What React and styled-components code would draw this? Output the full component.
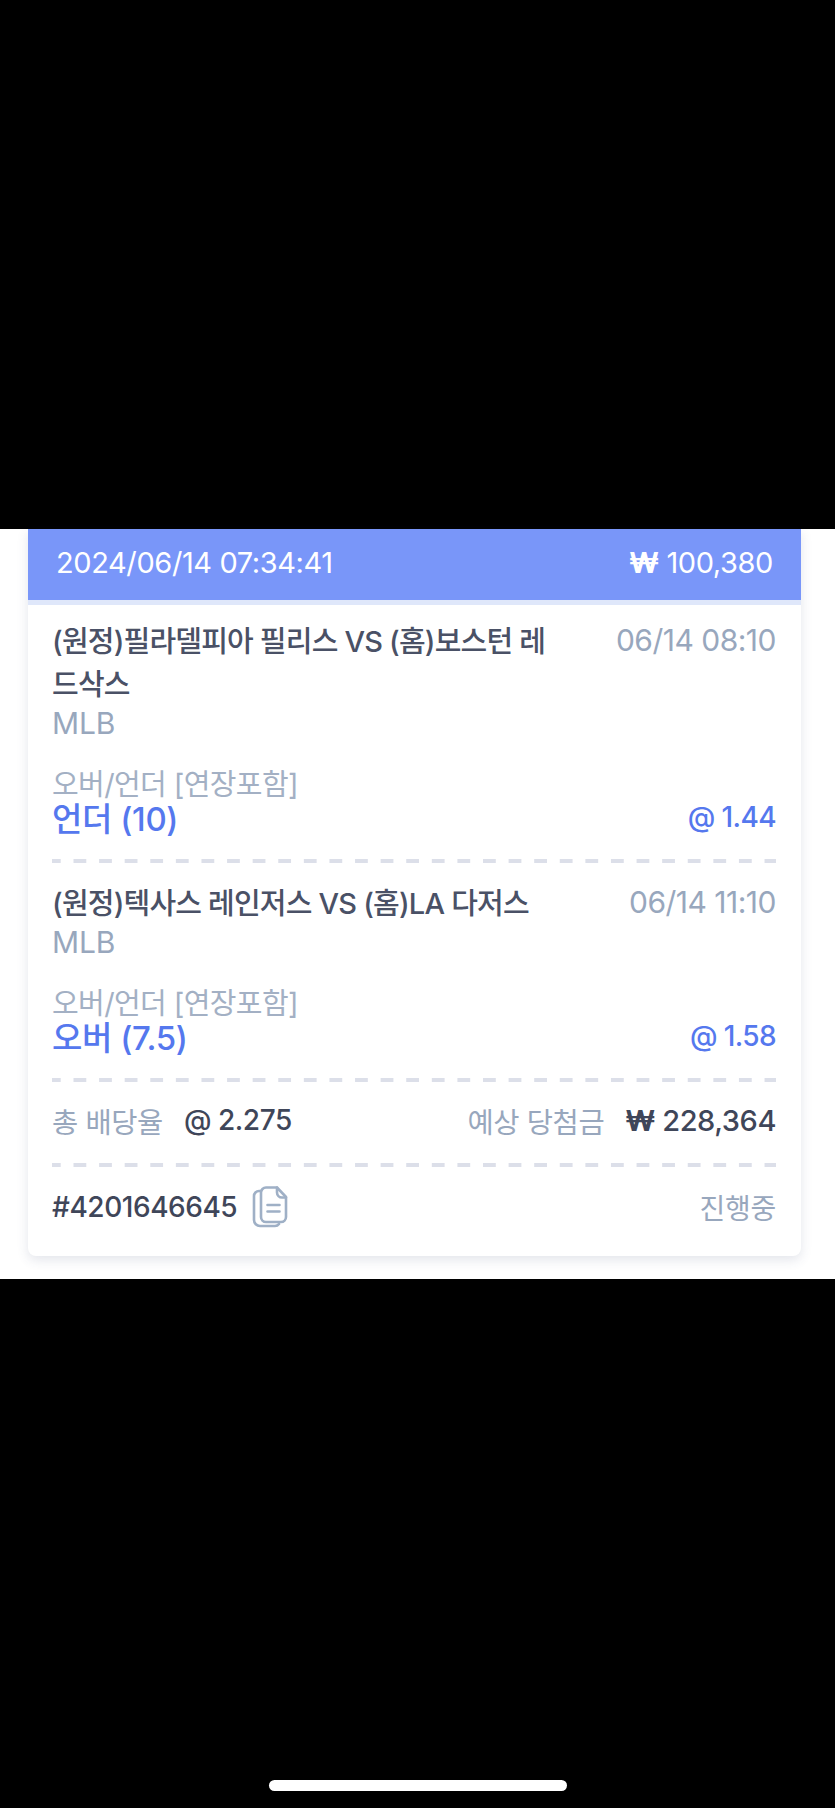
import React from "react";
import styled, { createGlobalStyle } from "styled-components";

const Global = createGlobalStyle`
  html, body { margin: 0; padding: 0; background: #000; }
  body { font-family: Inter, "Noto Sans CJK KR", sans-serif; }
`;
const Page = styled.div`
  width: 835px; height: 1808px; background: #000; display: flex; flex-direction: column; overflow: hidden;
`;
const TopBlack = styled.div`height: 529px; flex: none;`;
const Sheet = styled.section`
  height: 750px; flex: none; background: #fff; padding: 0 34px 0 28px; box-sizing: border-box;
`;
const Card = styled.div`
  height: 727px; background: #fff; border-radius: 0 0 8px 8px; box-shadow: 0 4px 12px rgba(60, 70, 110, 0.14); overflow: hidden;
`;
const Header = styled.header`
  height: 71px; box-sizing: border-box; background: #7996f9; display: flex; justify-content: space-between; align-items: center;
  padding: 0 28px 4px 28px; color: #fff; font-size: 29px; line-height: 36px; letter-spacing: -0.4px;
`;
const Strip = styled.div`height: 5px; background: #dfe7fa;`;
const Body = styled.div`padding: 15px 25px 0 24px; color: #3f4659;`;
const MatchRow = styled.div`display: flex; justify-content: space-between; align-items: flex-start; gap: 30px;`;
const Title = styled.div`
  font-size: 29px; line-height: 43px; font-weight: 500; color: #4a5166; width: 500px; letter-spacing: -0.8px; word-break: break-all;
`;
const Time = styled.div`font-size: 30px; line-height: 40px; color: #98a7bd; white-space: nowrap; letter-spacing: -0.5px;`;
const League = styled.div`font-size: 30px; line-height: 34px; color: #98a7bd; letter-spacing: -0.1px;`;
const Market = styled.div`font-size: 29px; line-height: 36px; color: #a3b0c4; margin-top: 27px; letter-spacing: -0.6px;`;
const PickRow = styled.div`display: flex; justify-content: space-between; align-items: center; height: 36px;`;
const Pick = styled.div`font-size: 33px; line-height: 36px; margin-top: -4px; font-weight: 500; color: #5578ee; letter-spacing: -0.4px;`;
const Odds = styled.div`font-size: 28px; line-height: 36px; margin-top: -8px; font-weight: 500; color: #5578ee; letter-spacing: -0.6px;`;
const Dash = styled.div`
  height: 4px; margin: ${p => p.$m}; background-image: linear-gradient(90deg, #dcdfe9 50%, transparent 50%);
  background-size: 25.6px 100%; background-position: 21.5px 0;
`;
const Summary = styled.div`display: flex; justify-content: space-between; align-items: center; height: 36px; margin-top: -4px;`;
const Group = styled.div`display: flex; align-items: center; gap: ${p => p.$g}px;`;
const Label = styled.span`font-size: 28.5px; color: #98a7bd; letter-spacing: -0.4px;`;
const Value = styled.span`font-size: ${p => p.$s}px; font-weight: 500; color: #3f4659; letter-spacing: -0.45px;`;
const Won = styled.span`font-weight: 700;`;
const Footer = styled.div`display: flex; justify-content: space-between; align-items: center; height: 44px; margin-top: -3px;`;
const Status = styled.span`font-size: 28px; color: #98a7bd; letter-spacing: -0.3px;`;
const BottomBlack = styled.div`flex: 1; display: flex; justify-content: center; align-items: flex-start; padding-top: 501px;`;
const HomeBar = styled.div`width: 298px; height: 11px; border-radius: 6px; background: #fff;`;

const CopyIcon = () => (
  <svg width="36" height="42" viewBox="0 0 36 42" fill="none" stroke="#9fb0c6" strokeWidth="2.6" strokeLinejoin="round" strokeLinecap="round">
    <path d="M9 5H7a5 5 0 0 0-5 5v24a6 6 0 0 0 6 6h15a5 5 0 0 0 4-2" />
    <path d="M14 1.500h11l9 9.500v20a5 5 0 0 1-5 5H14a5 5 0 0 1-5-5V6.500a5 5 0 0 1 5-5z" />
    <path d="M25 1.500v5a5 5 0 0 0 5 5h4" />
    <path d="M15.500 19h12M15.500 25.500h12" />
  </svg>
);

export default function App() {
  return (
    <Page>
      <Global />
      <TopBlack />
      <Sheet>
        <Card>
          <Header>
            <span>2024/06/14 07:34:41</span>
            <span><Won>₩</Won> 100,380</span>
          </Header>
          <Strip />
          <Body>
            <MatchRow>
              <Title>(원정)필라델피아 필리스 VS (홈)보스턴 레드삭스</Title>
              <Time>06/14 08:10</Time>
            </MatchRow>
            <League>MLB</League>
            <Market>오버/언더 [연장포함]</Market>
            <PickRow>
              <Pick>언더 (10)</Pick>
              <Odds>@ 1.44</Odds>
            </PickRow>
            <Dash $m="20px 0 19px" />
            <MatchRow>
              <Title>(원정)텍사스 레인저스 VS (홈)LA 다저스</Title>
              <Time>06/14 11:10</Time>
            </MatchRow>
            <League>MLB</League>
            <Market>오버/언더 [연장포함]</Market>
            <PickRow>
              <Pick>오버 (7.5)</Pick>
              <Odds>@ 1.58</Odds>
            </PickRow>
            <Dash $m="20px 0 24px" />
            <Summary>
              <Group $g={21}>
                <Label>총 배당율</Label>
                <Value $s={28}>@ 2.275</Value>
              </Group>
              <Group $g={21}>
                <Label>예상 당첨금</Label>
                <Value $s={29}><Won>₩</Won> 228,364</Value>
              </Group>
            </Summary>
            <Dash $m="25px 0 21px" />
            <Footer>
              <Group $g={15}>
                <Value $s={28}>#4201646645</Value>
                <CopyIcon />
              </Group>
              <Status>진행중</Status>
            </Footer>
          </Body>
        </Card>
      </Sheet>
      <BottomBlack>
        <HomeBar />
      </BottomBlack>
    </Page>
  );
}
